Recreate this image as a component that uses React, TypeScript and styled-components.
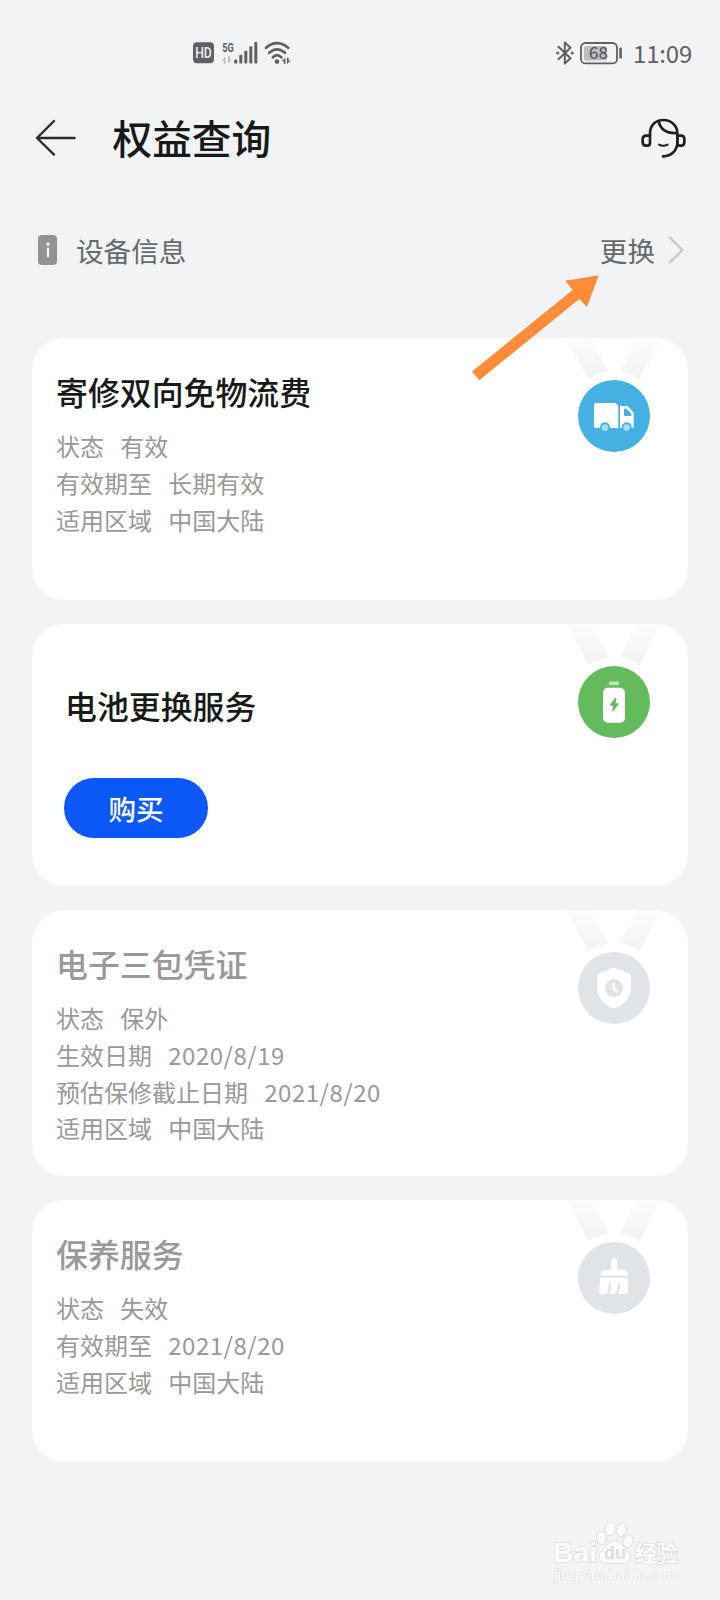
import React from "react";
import styled, { createGlobalStyle } from "styled-components";

const GlobalStyle = createGlobalStyle`
  * { box-sizing: border-box; }
  body {
    margin: 0;
    background: #f1f3f5;
    font-family: "Noto Sans CJK SC", sans-serif;
  }
`;

const Screen = styled.main`
  position: relative;
  display: flex;
  flex-direction: column;
  width: 720px;
  height: 1600px;
  overflow: hidden;
  background: #f1f3f5;
`;

const StatusBar = styled.div`
  display: flex;
  align-items: center;
  justify-content: space-between;
  height: 106px;
  padding: 0 28px 0 193px;

  svg {
    overflow: visible;
  }
`;

const StatusGroup = styled.div<{ $gap: number }>`
  display: flex;
  align-items: center;
  gap: ${(p) => p.$gap}px;
`;

const Clock = styled.span`
  font-size: 24px;
  line-height: 36px;
  letter-spacing: -0.2px;
  color: #5e6063;
`;

const Header = styled.header`
  display: flex;
  align-items: center;
  height: 64px;
  padding: 0 34px 0 36px;
`;

const PageTitle = styled.h1`
  flex: 1;
  margin: -2px 0 0 36.5px;
  font-size: 39.7px;
  line-height: 64px;
  font-weight: 500;
  color: #191919;
`;

const DeviceRow = styled.div`
  display: flex;
  align-items: center;
  height: 64px;
  margin-top: 48px;
  padding: 0 36px 0 38px;
  color: #66686a;
  font-size: 27.6px;
  line-height: 64px;
`;

const InfoBadge = styled.span`
  display: flex;
  align-items: center;
  justify-content: center;
  width: 19px;
  height: 30px;
  border-radius: 4px;
  background: #929395;
`;

const DeviceLabel = styled.span`
  flex: 1;
  margin: -1px 0 0 19px;
`;

const ChangeLink = styled.span`
  display: flex;
  align-items: center;
  gap: 13px;
`;

const CardList = styled.section`
  display: flex;
  flex-direction: column;
  gap: 24px;
  margin-top: 56px;
  padding: 0 32px;
`;

const Card = styled.article<{ $height?: number }>`
  display: flex;
  justify-content: space-between;
  height: ${(p) => p.$height ?? 262}px;
  padding: 0 24px;
  border-radius: 33px;
  background: #fff;
`;

const CardBody = styled.div`
  display: flex;
  flex-direction: column;
  padding-top: 29px;
`;

const CardTitle = styled.h2<{ $muted?: boolean }>`
  margin: 0 0 13.3px;
  font-size: 31.9px;
  line-height: 48px;
  font-weight: 500;
  color: ${(p) => (p.$muted ? "#999" : "#191919")};
`;

const Fact = styled.div`
  display: flex;
  gap: 16.3px;
  height: 36.7px;
  font-size: 24px;
  line-height: 36.7px;
  color: #999;
`;

const FactValue = styled.span<{ $numeric: boolean }>`
  letter-spacing: ${(p) => (p.$numeric ? "0.5px" : "0")};
`;

const OfferBody = styled.div`
  display: flex;
  flex-direction: column;
  align-items: flex-start;
  gap: 49px;
  padding: 57px 0 0 8px;
`;

const OfferTitle = styled(CardTitle)`
  margin: 0 0 0 1px;
`;

const BuyButton = styled.button`
  width: 144px;
  height: 60px;
  padding: 0;
  border: 0;
  border-radius: 30px;
  background: #0a59f7;
  color: #fff;
  font: 500 27.6px/58px "Noto Sans CJK SC", sans-serif;
`;

const MedalSvg = styled.svg`
  flex: none;
  display: block;
`;

const Pointer = styled.svg`
  position: absolute;
  left: 468px;
  top: 272px;
`;

const Watermark = styled.div`
  position: absolute;
  left: 546px;
  top: 1516px;
`;

type IconName = "truck" | "battery" | "shield" | "brush";

const medalColor: Record<IconName, string> = {
  truck: "#45b1e2",
  battery: "#64bb5c",
  shield: "#e0e4e7",
  brush: "#e0e4e7",
};

function MedalIcon({ name }: { name: IconName }) {
  const bg = medalColor[name];
  if (name === "truck")
    return (
      <g fill="#fff">
        <path d="M32 65H51.5L54.3 67.8V90H32Q30 90 30 88V67Q30 65 32 65Z" />
        <path d="M56 68H62.5Q63.6 68 64.4 68.8L68.7 73.4Q69.7 74.5 69.7 76V88.5Q69.7 90 68.2 90H56Z" />
        <path d="M60 71.8Q60 70.6 61.2 70.6H61.8Q62.4 70.6 62.8 71L66.8 75Q67.4 75.8 67.4 76.6V77Q67.4 78 66.4 78H61Q60 78 60 77Z" fill={bg} />
        <circle cx="41" cy="89.3" r="5" fill={bg} />
        <circle cx="62.7" cy="89.3" r="5" fill={bg} />
        <circle cx="41" cy="89.6" r="3.3" fill="#a5dbf5" />
        <circle cx="62.7" cy="89.6" r="3.3" fill="#a5dbf5" />
      </g>
    );
  if (name === "battery")
    return (
      <g fill="#fff">
        <rect x="45" y="57.5" width="10" height="3.4" rx="1" fill="#c1e4be" />
        <rect x="39" y="63.7" width="22" height="35" rx="5" />
        <path
          d="M51.2 74.8L46.6 81H49.9L49 86.5L53.8 80H50.6L51.8 74.8Z"
          fill={bg}
          stroke={bg}
          strokeWidth="1.4"
          strokeLinejoin="round"
        />
      </g>
    );
  if (name === "shield")
    return (
      <g fill="#fff">
        <path d="M48.6 58.2Q50 57.5 51.4 58.2L65.2 63.4Q67 64.2 67 66V77.5C67 87 60.5 94.5 51.8 97.7Q50 98.4 48.2 97.7C39.5 94.5 33 87 33 77.5V66Q33 64.2 34.8 63.4Z" />
        <circle cx="50" cy="78" r="9" fill={bg} />
        <path d="M49.6 73V78.6L53.8 82" fill="none" stroke="#fff" strokeWidth="2.5" />
      </g>
    );
  return (
    <g fill="#fff">
      <path d="M47 61Q47 58 50.1 58Q53.3 58 53.3 61V69.8H58Q64 70 64 75.5H36.5Q36.5 70 42 69.8H47Z" />
      <path d="M36.3 77.8H64V92Q64 94 62 94H54.2Q56 91 56 84.6Q56 83.3 54.8 83.3Q53.7 83.3 53.6 84.6Q53.2 91.5 50.8 94H45Q47.2 91 47.2 84.6Q47.2 83.3 46 83.3Q44.8 83.3 44.7 84.6Q44.4 91.5 42.6 94H36.5Q34.6 94 34.9 92Q36.3 85 36.3 77.8Z" />
    </g>
  );
}

function Medal({ name }: { name: IconName }) {
  const id = `ribbon-${name}`;
  return (
    <MedalSvg width="100" height="116" viewBox="0 0 100 116">
      <defs>
        <linearGradient id={id} x1="0" y1="0" x2="0" y2="42" gradientUnits="userSpaceOnUse">
          <stop offset="0" stopColor="#fcfcfc" />
          <stop offset="1" stopColor="#f2f2f3" />
        </linearGradient>
      </defs>
      <path d="M2 0H26L46 36L27 46Z M97 0H74L54 36L73 46Z" fill={`url(#${id})`} />
      <circle cx="50" cy="78" r="45" fill="#fff" />
      <circle cx="50" cy="78" r="36" fill={medalColor[name]} />
      <MedalIcon name={name} />
    </MedalSvg>
  );
}

interface Benefit {
  title: string;
  icon: IconName;
  muted?: boolean;
  height?: number;
  facts?: [string, string][];
}

const benefits: Benefit[] = [
  {
    title: "寄修双向免物流费",
    icon: "truck",
    facts: [
      ["状态", "有效"],
      ["有效期至", "长期有效"],
      ["适用区域", "中国大陆"],
    ],
  },
  { title: "电池更换服务", icon: "battery" },
  {
    title: "电子三包凭证",
    icon: "shield",
    muted: true,
    height: 266,
    facts: [
      ["状态", "保外"],
      ["生效日期", "2020/8/19"],
      ["预估保修截止日期", "2021/8/20"],
      ["适用区域", "中国大陆"],
    ],
  },
  {
    title: "保养服务",
    icon: "brush",
    muted: true,
    facts: [
      ["状态", "失效"],
      ["有效期至", "2021/8/20"],
      ["适用区域", "中国大陆"],
    ],
  },
];

function BenefitCard({ title, icon, muted, height, facts }: Benefit) {
  return (
    <Card $height={height}>
      {facts ? (
        <CardBody>
          <CardTitle $muted={muted}>{title}</CardTitle>
          {facts.map(([label, value]) => (
            <Fact key={label}>
              <span>{label}</span>
              <FactValue $numeric={/^\d/.test(value)}>{value}</FactValue>
            </Fact>
          ))}
        </CardBody>
      ) : (
        <OfferBody>
          <OfferTitle>{title}</OfferTitle>
          <BuyButton>购买</BuyButton>
        </OfferBody>
      )}
      <Medal name={icon} />
    </Card>
  );
}

const NetworkIcons = () => (
  <svg width="98" height="24" viewBox="0 0 98 24" fill="#5e6063">
    <rect x="0" y="1.3" width="21" height="21" rx="4" />
    <text x="10.5" y="17.2" textAnchor="middle" fontFamily="Roboto" fontWeight="500" fontSize="14" textLength="16.5" lengthAdjust="spacingAndGlyphs" fill="#f1f3f5">
      HD
    </text>
    <text x="29.3" y="10.6" fontFamily="Roboto" fontWeight="700" fontSize="13" textLength="11.5" lengthAdjust="spacingAndGlyphs">
      5G
    </text>
    <path d="M29 19.6L32.4 15.4V22.8H30.8V19.6Z M38.6 18.4L35.2 22.6V15.2H36.8V18.4Z" fill="#b4b6b8" />
    <rect x="41.2" y="18.6" width="3" height="4" rx="1" />
    <rect x="46.3" y="13.7" width="3" height="8.9" rx="1" />
    <rect x="51.3" y="9.7" width="3" height="12.9" rx="1" />
    <rect x="56.3" y="5.3" width="3" height="17.3" rx="1" />
    <rect x="61.3" y="1" width="3" height="21.6" rx="1" />
    <g fill="none" stroke="#5e6063" strokeWidth="2.7" strokeLinecap="round">
      <path d="M73 6.8Q84 -2.4 95.2 6.8" />
      <path d="M76.2 11.8Q84 4.8 92 11.8" />
      <path d="M79.8 16.4Q84 11.8 88.4 16.4" />
    </g>
    <circle cx="84" cy="20.6" r="2.3" />
    <path d="M88.6 20.2L92.4 16.8V23H90.8V20.2Z M97.8 19.6L94 23V16.8H95.6V19.6Z" />
  </svg>
);

const BluetoothIcon = () => (
  <svg width="18" height="24" viewBox="0 0 18 24" fill="none" stroke="#5e6063" strokeWidth="2" strokeLinejoin="round" strokeLinecap="round">
    <path d="M2.5 5.8L14.5 17.2L8.8 22.6V1.4L14.5 6.8L2.5 18.2" />
    <circle cx="1.7" cy="12" r="0.6" />
    <circle cx="16.2" cy="12" r="0.6" />
  </svg>
);

const BatteryIcon = () => (
  <svg width="43" height="24" viewBox="0 0 43 24">
    <rect x="1" y="2" width="36" height="20.4" rx="4.5" fill="none" stroke="#5e6063" strokeWidth="1.8" />
    <rect x="4" y="5" width="23" height="14.4" rx="2" fill="#bcbdbf" />
    <rect x="39.3" y="6.6" width="2.6" height="11" rx="1" fill="#5e6063" />
    <text x="18.4" y="18.4" textAnchor="middle" fontFamily="Noto Sans CJK SC" fontSize="17" fill="#4f5154">
      68
    </text>
  </svg>
);

const BackIcon = () => (
  <svg width="40" height="38" viewBox="0 0 40 38" fill="none" stroke="#2b2c2e" strokeWidth="2.4" strokeLinecap="round" strokeLinejoin="round">
    <path d="M1 19H38.6M18 2L1 19L18 35.6" />
  </svg>
);

const SupportIcon = () => (
  <svg width="45" height="40" viewBox="0 0 135 120" fill="none" stroke="#1f2022" strokeWidth="8" strokeLinecap="round" strokeLinejoin="round">
    <path d="M27 52V46C27 22 44 6 67 6C90 6 109 22 109 46V73C109 99 90 114 66 115" />
    <path d="M27 53H16Q5 53 5 64V73Q5 83 15 83H19Q27 83 27 75Z" />
    <path d="M109 53H120Q130 53 130 64V73Q130 83 121 83H117Q109 83 109 75Z" />
    <path d="M53 11C58 33 76 47 106 45" />
    <path d="M54 80Q66 87 80 80" strokeWidth="6" />
  </svg>
);

export default function App() {
  return (
    <>
      <GlobalStyle />
      <Screen>
        <StatusBar>
          <NetworkIcons />
          <StatusGroup $gap={10}>
            <StatusGroup $gap={6}>
              <BluetoothIcon />
              <BatteryIcon />
            </StatusGroup>
            <Clock>11:09</Clock>
          </StatusGroup>
        </StatusBar>

        <Header>
          <BackIcon />
          <PageTitle>权益查询</PageTitle>
          <SupportIcon />
        </Header>

        <DeviceRow>
          <InfoBadge>
            <svg width="6" height="16" viewBox="0 0 6 16" fill="#f1f3f5">
              <circle cx="3" cy="2" r="1.7" />
              <rect x="1.9" y="5.5" width="2.2" height="10" rx="1" />
            </svg>
          </InfoBadge>
          <DeviceLabel>设备信息</DeviceLabel>
          <ChangeLink>
            更换
            <svg width="16" height="28" viewBox="0 0 16 28" fill="none" stroke="#c6c8ca" strokeWidth="2.3" strokeLinecap="round" strokeLinejoin="round">
              <path d="M2 1.6L14.4 14L2 26.4" />
            </svg>
          </ChangeLink>
        </DeviceRow>

        <CardList>
          {benefits.map((b) => (
            <BenefitCard key={b.title} {...b} />
          ))}
        </CardList>

        <Pointer width="134" height="112" viewBox="468 272 134 112">
          <path d="M598.7 275.3L587 307L579.3 299L479.3 380.3L472 371.4L572.7 290L565.3 280.7Z" fill="#ff8c38" />
        </Pointer>

        <Watermark>
          <svg width="150" height="76" viewBox="0 0 150 76" fill="#fbfbfc" stroke="#dcdee0" strokeWidth="1.6">
            <g style={{ paintOrder: "stroke" }} fontFamily="Liberation Sans" fontWeight="700">
              <text x="7" y="46" fontSize="28.5" textLength="44" lengthAdjust="spacingAndGlyphs">
                Bai
              </text>
              <text x="89" y="45" fontSize="22" textLength="43" fontFamily="Noto Sans CJK SC">
                经验
              </text>
              <text x="8" y="63.5" fontSize="15.5" fontWeight="400" stroke="#e3e5e7" strokeWidth="1.2" textLength="126" lengthAdjust="spacingAndGlyphs">
                jingyan.baidu.com
              </text>
            </g>
            <g strokeWidth="1">
              <ellipse cx="55.5" cy="22" rx="5" ry="6.6" transform="rotate(-12 55.5 22)" />
              <ellipse cx="64.2" cy="12.8" rx="5" ry="6.8" />
              <ellipse cx="75.6" cy="13.8" rx="5" ry="6.8" transform="rotate(10 75.6 13.8)" />
              <ellipse cx="82.2" cy="25.2" rx="5" ry="6.2" transform="rotate(14 82.2 25.2)" />
              <path d="M69 25C75 25 77 30 81 34C88 40 83 48 76 47.6C71 47.2 67 47.2 62 47.6C54 48 50 40 56 35C60 31 62 25 69 25Z" />
            </g>
            <text x="69" y="43" textAnchor="middle" fontSize="18" fontFamily="Liberation Sans" fontWeight="700" fill="#dcdee0" stroke="none">
              du
            </text>
          </svg>
        </Watermark>
      </Screen>
    </>
  );
}
